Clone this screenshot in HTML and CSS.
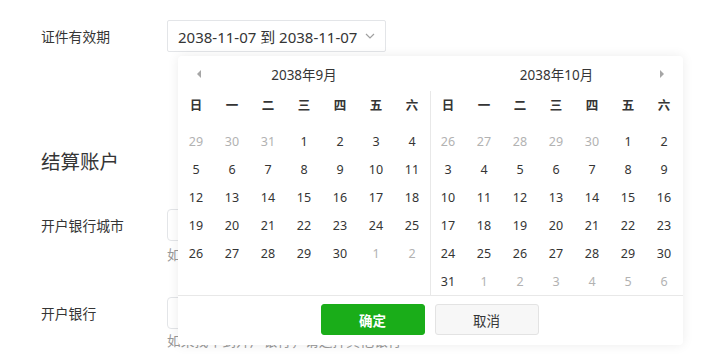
FILE: index.html
```html
<!DOCTYPE html>
<html lang="zh-CN">
<head>
    <meta charset="UTF-8">
    <title>结算账户</title>
    <link rel="stylesheet" href="styles.css">
</head>
<body>
    <div class="form">
        <div class="row">
            <div class="label">证件有效期</div>
            <div class="select">
                <span>2038-11-07 到 2038-11-07</span>
                <svg class="chevron" width="10" height="6" viewBox="0 0 10 6"><path d="M1 1l4 4 4-4" fill="none" stroke="#a0a0a0" stroke-width="1.2"/></svg>
            </div>
        </div>

        <div class="heading">结算账户</div>

        <div class="row">
            <div class="label">开户银行城市</div>
            <div class="input"></div>
        </div>
        <div class="hint">如果找不到所在城市，请选择所在地区或上级城市</div>

        <div class="row row-bank">
            <div class="label">开户银行</div>
            <div class="input"></div>
        </div>
        <div class="hint hint-last">如果找不到开户银行，请选择其他银行</div>
    </div>

    <div class="picker">
        <div class="panels">
            <div class="panel">
                <div class="panel-head">
                    <span class="arrow arrow-left"></span>
                    <span class="title">2038年9月</span>
                    <span class="arrow-space"></span>
                </div>
                <div class="panel-body">
                    <div class="weeks"></div>
                    <div class="grid" id="sep"></div>
                </div>
            </div>
            <div class="panel panel-right">
                <div class="panel-head">
                    <span class="arrow-space"></span>
                    <span class="title">2038年10月</span>
                    <span class="arrow arrow-right"></span>
                </div>
                <div class="panel-body">
                    <div class="weeks"></div>
                    <div class="grid" id="oct"></div>
                </div>
            </div>
        </div>
        <div class="picker-foot">
            <button class="btn btn-primary">确定</button>
            <button class="btn">取消</button>
        </div>
    </div>

    <script>
        document.querySelectorAll('.weeks').forEach(function (row) {
            row.innerHTML = '日一二三四五六'.split('').map(function (w) {
                return '<div class="week">' + w + '</div>';
            }).join('');
        });

        function fillMonth(id, prevDays, start, total, rows) {
            var cells = [];
            for (var i = start - 1; i >= 0; i--) cells.push({ d: prevDays - i, muted: true });
            for (var d = 1; d <= total; d++) cells.push({ d: d });
            var n = 1;
            while (cells.length < rows * 7) cells.push({ d: n++, muted: true });
            document.getElementById(id).innerHTML = cells.map(function (c) {
                return '<div class="day' + (c.muted ? ' muted' : '') + '">' + c.d + '</div>';
            }).join('');
        }
        fillMonth('sep', 31, 3, 30, 5);
        fillMonth('oct', 30, 5, 31, 6);
    </script>
</body>
</html>
```

FILE: styles.css
```css
body {
    margin: 0;
    font-family: "Noto Sans", "Noto Sans CJK SC", sans-serif;
    color: #353535;
    background-color: #fff;
}
.form {
    padding: 20px 0 0 41px;
}
.row {
    display: flex;
    align-items: center;
}
.label {
    width: 126px;
    font-family: "Noto Sans CJK SC", sans-serif;
    font-size: 13.8px;
}
.select {
    display: flex;
    align-items: center;
    height: 30px;
    padding: 0 10px;
    border: 1px solid #e3e5e8;
    border-radius: 2px;
    font-size: 15px;
}
.chevron {
    margin-left: 8px;
}
.heading {
    margin-top: 98px;
    font-size: 19.5px;
    line-height: 24px;
}
.hint {
    margin: 5px 0 0 126px;
    font-size: 13.8px;
    line-height: 18px;
    color: #999;
}
.hint-last {
    margin-top: 3px;
}
.heading + .row {
    margin-top: 35px;
}
.input {
    width: 280px;
    height: 30px;
    border: 1px solid #e3e5e8;
    border-radius: 4px;
}
.row-bank {
    margin-top: 33px;
}
.picker {
    position: absolute;
    top: 56px;
    left: 178px;
    width: 505px;
    background-color: #fff;
    border-radius: 4px;
    box-shadow: 0 0 12px rgba(0, 0, 0, 0.08);
}
.panels {
    display: flex;
}
.panel {
    width: 252px;
}
.panel-right {
    width: 253px;
}
.panel-right .panel-body {
    border-left: 1px solid #e8e8e8;
}
.panel-head {
    display: flex;
    align-items: center;
    justify-content: space-between;
    height: 35px;
    padding: 0 19px;
    font-size: 13.5px;
}
.title {
    flex: 1;
    text-align: center;
}
.arrow, .arrow-space {
    width: 4px;
}
.arrow {
    height: 0;
    border-top: 4px solid transparent;
    border-bottom: 4px solid transparent;
}
.arrow-left {
    border-right: 4px solid #a6a6a6;
    width: 0;
}
.arrow-right {
    border-left: 4px solid #a6a6a6;
    width: 0;
}
.panel-body {
    height: 204px;
}
.weeks, .grid {
    display: grid;
    grid-template-columns: repeat(7, 36px);
    grid-auto-rows: 28px;
}
.weeks {
    grid-auto-rows: 26px;
    margin-bottom: 10px;
}
.panel-right .weeks, .panel-right .grid {
    margin-left: -1px;
}
.week {
    display: flex;
    align-items: center;
    justify-content: center;
    font-size: 12.5px;
    font-weight: bold;
}
.day {
    display: flex;
    align-items: center;
    justify-content: center;
    font-size: 12.5px;
}
.day.muted {
    color: #b2b2b2;
}
.picker-foot {
    display: flex;
    justify-content: center;
    gap: 10px;
    padding: 8px 2px 10px 0;
    border-top: 1px solid #e8e8e8;
}
.btn {
    width: 104px;
    height: 31px;
    border: 1px solid #e3e3e3;
    border-radius: 3px;
    background-color: #f7f7f7;
    color: #353535;
    font-family: "Noto Sans CJK SC", sans-serif;
    font-size: 13.5px;
    cursor: pointer;
}
.btn-primary {
    background-color: #1aad19;
    border-color: #1aad19;
    color: #fff;
    font-weight: bold;
}
```
